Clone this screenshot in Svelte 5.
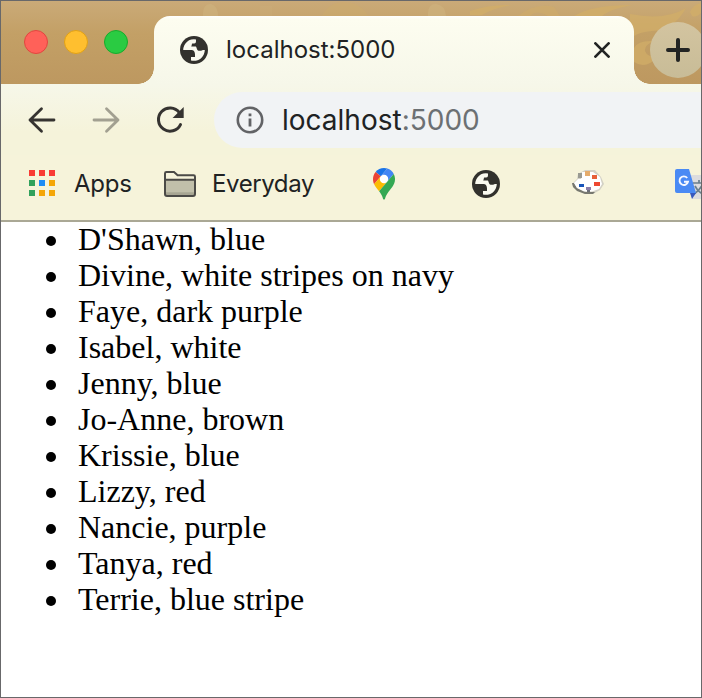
<script>
  const lights = ['red', 'yellow', 'green'];
  const appDots = ['#f93b35', '#f93b35', '#f93b35', '#31a15c', '#1e8cf5', '#f4a608', '#31a15c', '#f4a608', '#f4a608'];
  const people = [
    ["D'Shawn", 'blue'],
    ['Divine', 'white stripes on navy'],
    ['Faye', 'dark purple'],
    ['Isabel', 'white'],
    ['Jenny', 'blue'],
    ['Jo-Anne', 'brown'],
    ['Krissie', 'blue'],
    ['Lizzy', 'red'],
    ['Nancie', 'purple'],
    ['Tanya', 'red'],
    ['Terrie', 'blue stripe']
  ];
</script>

{#snippet globe()}
  <svg class="globe" width="28" height="28" viewBox="0 0 28 28" aria-hidden="true">
    <circle cx="14" cy="14" r="14" fill="#32312d" />
    <path fill="#fafaf0" d="M3.2 14A10.8 10.8 0 0 1 16 3.4V5.2C16 7.2 15 7.6 12.4 7.6C11.6 7.6 12 9.8 11.2 10.4H15.8C16.8 10.4 16.2 14.6 19.6 14.8C21.4 15 22.2 14 22.8 14H24.8A10.8 10.8 0 0 1 11 24.4V21H15V18.6C15 15.2 13.4 14 11.2 14Z" />
  </svg>
{/snippet}

<div class="window">
  <header class="strip">
    <svg class="pattern" width="700" height="83" viewBox="1 1 700 83" aria-hidden="true">
      <g fill="#d3af68" opacity=".7">
        <path d="M470 11Q490 4 512 5Q494 8 482 15H470ZM574 16Q592 5 632 5Q610 9 602 16ZM630 14Q665 21 686 8Q674 30 652 31Q640 32 634 36L630 22Z" />
        <path d="M634 48Q638 40 654 41Q644 45 645 51Q647 57 657 57Q646 70 634 62Z" />
        <path d="M690 12Q693 5 701 3V13Q696 18 692 16Z" />
        <path d="M322 16Q329 2 344 2Q360 2 368 16Z" opacity=".4" />
        <path d="M518 16Q536 2 554 7L560 16H548Q536 9 530 16Z" opacity=".6" />
      </g>
      <g fill="#d3ba85" opacity=".4">
        <path d="M203 16Q202 4 211 4Q218 6 218 16ZM428 16Q427 4 436 4Q445 5 446 16Z" />
        <path d="M260 16V6H272V16Z" opacity=".35" />
      </g>
    </svg>
    <div class="lights">
      {#each lights as light}<span class={light}></span>{/each}
    </div>
    <div class="tab">
      {@render globe()}
      <span class="title">localhost:5000</span>
      <svg class="close" width="16" height="16" viewBox="0 0 16 16" aria-hidden="true"><path d="M1.4 1.4L14.6 14.6M14.6 1.4L1.4 14.6" stroke="#222423" stroke-width="2.7" stroke-linecap="round" /></svg>
    </div>
    <div class="plus">
      <svg width="24" height="24" viewBox="0 0 24 24" aria-hidden="true"><path d="M12 2V22M2 12H22" stroke="#222423" stroke-width="4" stroke-linecap="round" /></svg>
    </div>
  </header>

  <nav class="toolbar">
    <svg width="28" height="28" viewBox="0 0 28 28" fill="none" stroke="#353330" stroke-width="2.8" stroke-linecap="round" stroke-linejoin="round" aria-hidden="true"><path d="M26 14H2M13.5 2.8L2 14L13.5 25.2" /></svg>
    <svg class="forward" width="28" height="28" viewBox="0 0 28 28" fill="none" stroke="#a2a091" stroke-width="2.8" stroke-linecap="round" stroke-linejoin="round" aria-hidden="true"><path d="M2 14H26M14.5 2.8L26 14L14.5 25.2" /></svg>
    <svg class="reload" width="28" height="28" viewBox="0 0 28 28" aria-hidden="true"><path d="M24.5 18.6A11.6 11.6 0 1 1 23.3 6.5" fill="none" stroke="#353330" stroke-width="3" stroke-linecap="round" /><path d="M27.7 1V12H16.6Z" fill="#353330" /></svg>
    <div class="address">
      <svg width="28" height="28" viewBox="0 0 28 28" aria-hidden="true"><circle cx="14" cy="14" r="12.2" fill="none" stroke="#626366" stroke-width="2.6" /><path d="M12.6 7.5H15.4V10.3H12.6ZM12.6 12.4H15.4V20.6H12.6Z" fill="#626366" /></svg>
      <span class="url">localhost<span class="port">:5000</span></span>
    </div>
  </nav>

  <nav class="bookmarks">
    <div class="apps">
      {#each appDots as color}<i style:background={color}></i>{/each}
    </div>
    <span class="label apps-label">Apps</span>
    <svg class="folder" width="32" height="26" viewBox="0 0 32 26" aria-hidden="true">
      <path d="M1 23V2.4Q1 1 2.4 1H10L13.6 4.3H29.6Q31 4.3 31 5.7V23Q31 25 29 25H3Q1 25 1 23Z" fill="#f7f4dc" />
      <path d="M1 8.8H31V24H1Z" fill="#c1bfaa" /><path d="M2 21.3H30V24H2Z" fill="#a7a593" />
      <path d="M1 23V2.4Q1 1 2.4 1H10L13.6 4.3H29.6Q31 4.3 31 5.7V23Q31 25 29 25H3Q1 25 1 23ZM1 8.8H31" fill="none" stroke="#4b4a47" stroke-width="2" />
    </svg>
    <span class="label everyday">Everyday</span>
    <svg class="pin" width="22" height="31.5" viewBox="0 0 92.3 132.3" aria-hidden="true">
      <circle cx="46" cy="46" r="20" fill="#fff" />
      <path fill="#1a73e8" d="M60.2 2.2C55.8.8 51 0 46.1 0 32 0 19.3 6.4 10.8 16.5l21.8 18.3L60.2 2.2z" />
      <path fill="#ea4335" d="M10.8 16.5C4.1 24.5 0 34.9 0 46.1c0 8.7 1.7 15.7 4.6 22l28-33.3-21.8-18.3z" />
      <path fill="#4285f4" d="M46.2 28.5c9.8 0 17.7 7.9 17.7 17.7 0 4.3-1.6 8.3-4.2 11.4 0 0 13.9-16.6 27.5-32.7-5.6-10.8-15.3-19-27-22.7L32.6 34.8c3.3-3.8 8.1-6.3 13.6-6.3" />
      <path fill="#fbbc04" d="M46.2 63.8c-9.8 0-17.7-7.9-17.7-17.7 0-4.3 1.5-8.3 4.1-11.3l-28 33.3c4.8 10.6 12.8 19.2 21 29.9l34.1-40.5c-3.3 3.9-8.1 6.3-13.5 6.3" />
      <path fill="#34a853" d="M59.1 109.2c15.4-24.1 33.3-35 33.3-63 0-7.7-1.9-14.9-5.2-21.3L25.6 98c2.6 3.4 5.3 7.3 7.9 11.3 9.4 14.5 6.8 23.1 12.8 23.1s3.4-8.7 12.8-23.2" />
    </svg>
    {@render globe()}
    <svg class="palette" width="32" height="26" viewBox="0 0 32 26" aria-hidden="true">
      <path d="M0 14L5 9L6 4L13 0H23L29 7L32 14L28 20L21 24H13L2 18Z" fill="#d3d1c5" />
      <path d="M0 13H2L5 18L14 22H23L21 24H13L5 21L1 17Z" fill="#777870" />
      <path d="M2 13L6 9H9L10 2H21L28 7L30 14L27 19L20 21.5H12L5 18Z" fill="#fff" />
      <path d="M6 3H10V8H6Z" fill="#999a92" /><path d="M13 1H18V6H13Z" fill="#e5ac6c" /><path d="M20 5H25V9H20Z" fill="#e76039" /><path d="M22 12H28V16H22Z" fill="#ee4932" /><path d="M7 14H12V17H7Z" fill="#1955ba" /><path d="M14 17H19V20H14Z" fill="#8c7fa8" /><path d="M15 20H18V22H15Z" fill="#6c6e77" />
    </svg>
    <svg class="translate" width="32" height="32" viewBox="0 0 32 32" aria-hidden="true">
      <path d="M13 6H32V30H17Z" fill="#dcdcde" />
      <path d="M18 14H30M24 11V14M28 14Q26 20 19 25M20 17Q23 23 28 25" fill="none" stroke="#697e8c" stroke-width="1.7" />
      <path d="M15 24H21L17 30Z" fill="#3758bd" />
      <path d="M2 0H14L21 24H2Q0 24 0 22V2Q0 0 2 0Z" fill="#4a8af4" />
      <path d="M12.2 9A4.3 4.3 0 1 0 13 12.7H9" fill="none" stroke="#f5f8ff" stroke-width="1.9" />
    </svg>
  </nav>

  <ul>
    {#each people as [name, color]}<li>{name}, {color}</li>{/each}
  </ul>
</div>

<style>
  .window {
    box-sizing: border-box;
    width: 702px;
    height: 698px;
    border: 1px solid #68686a;
    overflow: hidden;
    display: flex;
    flex-direction: column;
    background: #fff;
    font-family: Inter, "Liberation Sans", sans-serif;
    color: #202223;
  }
  svg { flex: none; display: block; }
  .strip {
    position: relative;
    flex: none;
    display: flex;
    height: 83px;
    background: linear-gradient(#caaa78, #c3a066 32px, #bd9860);
  }
  .pattern { position: absolute; left: 0; top: 0; }
  .lights {
    position: relative;
    flex: none;
    box-sizing: border-box;
    width: 153px;
    padding: 29px 0 0 23px;
    display: flex;
    gap: 16px;
  }
  .lights span { box-sizing: border-box; width: 24px; height: 24px; border-radius: 50%; border-width: 1px; border-style: solid; }
  .lights .red { background: #ff6159; border-color: #e2463f; }
  .lights .yellow { background: #ffbf2f; border-color: #e1a116; }
  .lights .green { background: #2acb42; border-color: #17ac2c; }
  .tab {
    position: relative;
    flex: none;
    box-sizing: border-box;
    width: 480px;
    height: 68px;
    margin-top: 15px;
    padding: 0 24px 0 26px;
    display: flex;
    align-items: center;
    border-radius: 16px 16px 0 0;
    background: linear-gradient(#fff, #fdfdf0 3px, #f6f7e9);
  }
  .tab::before, .tab::after { content: ""; position: absolute; bottom: 0; width: 16px; height: 16px; }
  .tab::before { left: -16px; background: radial-gradient(circle at 0 0, transparent 15.5px, #f6f7e9 16px); }
  .tab::after { right: -16px; background: radial-gradient(circle at 100% 0, transparent 15.5px, #f6f7e9 16px); }
  .title { margin-left: 18px; font-size: 24px; line-height: 30px; }
  .close { margin-left: auto; }
  .plus {
    position: relative;
    flex: none;
    width: 56px;
    height: 56px;
    margin: 21px 0 0 16px;
    border-radius: 50%;
    display: grid;
    place-items: center;
    background: linear-gradient(#d3c4a0, #c8bc97);
  }
  .toolbar {
    flex: none;
    height: 71px;
    box-sizing: border-box;
    padding-left: 27px;
    display: flex;
    align-items: center;
    background: linear-gradient(#f6f7e9, #f5f3da 48px);
  }
  .forward { margin-left: 36px; }
  .reload { margin-left: 36px; }
  .address {
    align-self: flex-start;
    box-sizing: border-box;
    flex: 1;
    height: 56px;
    margin: 8px 0 0 30px;
    padding-left: 22px;
    display: flex;
    align-items: center;
    border-radius: 28px 0 0 28px;
    background: #f1f3f5;
  }
  .url { margin-left: 18px; font-size: 28px; letter-spacing: 0; white-space: nowrap; }
  .port { color: #6c7073; }
  .bookmarks {
    flex: none;
    box-sizing: border-box;
    height: 67px;
    padding: 0 0 7px 28px;
    border-bottom: 2px solid #aaa895;
    display: flex;
    align-items: center;
    background: #f6f3da;
  }
  .apps { flex: none; margin-bottom: 2px; display: grid; grid-template-columns: repeat(3, 6px); grid-auto-rows: 6px; gap: 4px; }
  .label { flex: none; font-size: 24px; line-height: 30px; letter-spacing: -0.4px; white-space: nowrap; }
  .apps-label { width: 90px; margin-left: 19px; letter-spacing: -0.2px; }
  .everyday { width: 161px; margin-left: 16px; }
  .bookmarks .globe { margin-left: 77px; }
  .palette { margin: 0 0 2px 72px; }
  .translate { margin: 2px 0 0 71px; }
  ul {
    margin: 0;
    padding: 0 0 0 45px;
    list-style: none;
    color: #000;
    font: 32px/36px "Liberation Serif", "Times New Roman", serif;
  }
  li { box-sizing: border-box; height: 36px; padding-bottom: 2px; display: flex; align-items: center; white-space: pre; line-height: 34px; }
  li::before { content: ""; width: 10px; height: 10px; margin: 4px 22px 0 0; border-radius: 50%; background: #000; }
</style>
